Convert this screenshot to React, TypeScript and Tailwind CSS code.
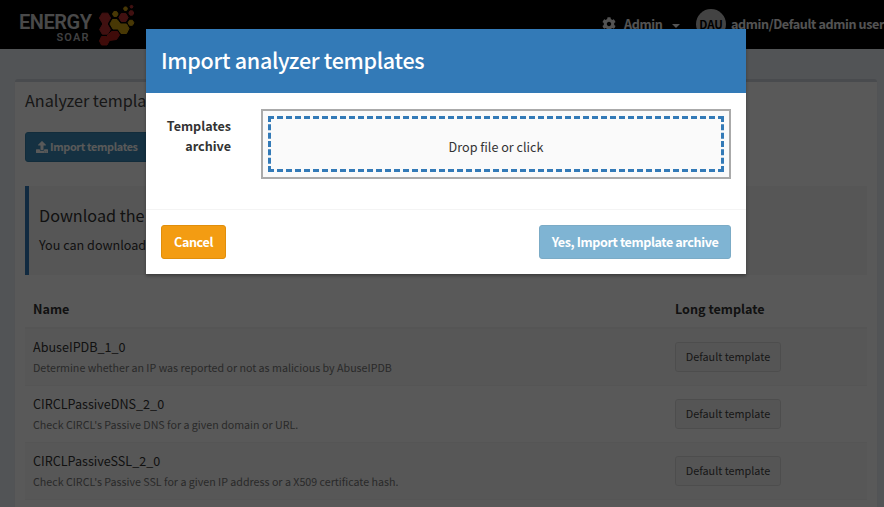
import React from "react";
import { FaCog, FaUpload } from "react-icons/fa";

const rows = [
  { name: "AbuseIPDB_1_0", text: "Determine whether an IP was reported or not as malicious by AbuseIPDB" },
  { name: "CIRCLPassiveDNS_2_0", text: "Check CIRCL's Passive DNS for a given domain or URL." },
  { name: "CIRCLPassiveSSL_2_0", text: "Check CIRCL's Passive SSL for a given IP address or a X509 certificate hash." },
];

function hexagon(cx: number, cy: number, r: number) {
  return [0, 60, 120, 180, 240, 300]
    .map((a) => `${cx + r * Math.cos((a * Math.PI) / 180)},${cy + r * Math.sin((a * Math.PI) / 180)}`)
    .join(" ");
}

function Logo() {
  return (
    <svg className="h-[49px] w-[140px] shrink-0" viewBox="0 0 140 49">
      <text x="19" y="29" textLength="73" lengthAdjust="spacing" fill="#d0d0d2" fontSize="20" fontWeight="600" fontFamily="Roboto, sans-serif">ENERGY</text>
      <text x="56.500" y="41" textLength="32" lengthAdjust="spacing" fill="#b8b8bb" fontSize="11" fontWeight="600" fontFamily="Roboto, sans-serif">SOAR</text>
      <g fill="#b83030" stroke="#b83030" strokeLinejoin="round">
        <polygon points={hexagon(105, 18, 5.6)} />
        <polygon points={hexagon(105, 29.5, 5.4)} />
        <path d="M102.500 21h5v6h-5z" />
        <path fill="#b5221c" stroke="#b5221c" d="M101.500 36.500h5l5-5h6l2 3.500-3 4.500-7 1-2.500 4.500h-5.500l-2-4z" />
        <polygon points={hexagon(123.5, 17.5, 4.6)} />
        <polygon points={hexagon(131.3, 13, 2.5)} />
        <polygon points={hexagon(131.5, 6.7, 1.5)} />
      </g>
      <g fill="#cfa010" stroke="#cfa010" strokeLinejoin="round">
        <polygon points={hexagon(115.3, 14, 2.8)} />
        <polygon points={hexagon(125.5, 8.7, 2)} />
        <polygon points={hexagon(131, 22.8, 2.9)} />
        <path d="M112.500 19.500h4.500l3.500 4.500h6l2.500 4.500-2.500 5h-5.500l-3-4.500h-5l-3-5z" />
      </g>
    </svg>
  );
}

export default function App() {
  return (
    <div className="relative h-[507px] w-[884px] overflow-hidden bg-[#ecf0f5] font-['Noto_Sans_CJK_SC',sans-serif] text-[12.6px] leading-5 text-[#333]">
      <header className="flex h-[49px] items-start bg-black text-white">
        <Logo />
        <div className="ml-[462px] flex h-[47px] shrink-0 items-center text-[12.6px] font-bold tracking-[-0.38px] whitespace-nowrap text-[#eee]">
          <FaCog className="size-3.5" />
          <span className="ml-2 w-10">Admin</span>
          <span className="mt-1 ml-2 border-x-4 border-t-4 border-x-transparent border-t-[#eee]" />
          <span className="ml-4 flex size-[30px] items-center justify-center rounded-full bg-[#bfbfbf] text-[11.4px] tracking-normal text-black">DAU</span>
          <span className="ml-[5px]">admin/Default admin user</span>
        </div>
      </header>

      <main className="mt-[30px] mr-[7px] ml-[15px] h-[440px] rounded-t-[3px] border-t-[3px] border-[#d2d6de] bg-white px-2.5 shadow-[0_1px_1px_rgba(0,0,0,0.1)]">
        <h3 className="h-[50px] pt-2 text-[16.2px] whitespace-nowrap text-[#444]">Analyzer templates</h3>
        <button className="flex h-[30px] w-[125px] items-center rounded-[3px] border border-[#367fa9] bg-[#3c8dbc] pl-2.5 text-[10.8px] font-bold tracking-[-0.33px] whitespace-nowrap text-white">
          <FaUpload className="mr-[2px] size-3" />
          <span className="-mt-0.5">Import templates</span>
        </button>
        <section className="mt-6 h-[89px] border-l-4 border-[#337ab7] bg-[#f7f7f7] px-2.5 pt-[19px]">
          <h4 className="text-[16.2px] whitespace-nowrap">Download the</h4>
          <p className="mt-2.5 whitespace-nowrap">You can download</p>
        </section>
        <div className="mt-4 flex h-[38px] items-center border-b-2 border-[#f4f4f4] pl-2 font-bold">
          <span className="w-[642px]">Name</span>
          <span>Long template</span>
        </div>
        {rows.map((row, i) => (
          <div key={row.name} className={`flex h-[57px] items-center border-b border-[#f4f4f4] pl-2 ${i % 2 === 0 ? "bg-[#f9f9f9]" : "bg-white"}`}>
            <div className="w-[642px] whitespace-nowrap">
              <div className="h-[21px]">{row.name}</div>
              <div className="text-[10.68px] text-[#777]">{row.text}</div>
            </div>
            <button className="h-[30px] w-[106px] rounded-[3px] border border-[#ddd] bg-[#f4f4f4] pb-0.5 text-[10.8px] whitespace-nowrap text-[#444]">Default template</button>
          </div>
        ))}
      </main>

      <div className="absolute inset-0 bg-black/65" />

      <div role="dialog" className="absolute top-[29px] left-[146px] h-[245px] w-[600px] bg-white shadow-[0_2px_3px_rgba(0,0,0,0.3)]">
        <h2 className="flex h-16 items-center bg-[#337ab7] px-[15px] pb-0.5 text-[21.5px] font-medium tracking-[-0.3px] whitespace-nowrap text-white">Import analyzer templates</h2>
        <div className="flex h-[116px] pt-4">
          <label className="w-[85px] pt-[7px] text-right font-bold">Templates archive</label>
          <div className="ml-[30px] h-[70px] w-[470px] border-2 border-[#aaa] bg-[#fafafa] p-[5px]">
            <div className="flex h-full items-center justify-center border-[3px] border-dashed border-[#337ab7] pt-1.5">Drop file or click</div>
          </div>
        </div>
        <footer className="flex h-[65px] justify-between border-t border-[#f4f4f4] p-[15px] font-bold tracking-[-0.4px] whitespace-nowrap text-white">
          <button className="h-[34px] w-[65px] rounded-[3px] border border-[#e08e0b] bg-[#f39c12]">Cancel</button>
          <button className="h-[34px] w-48 rounded-[3px] border border-[#367fa9] bg-[#3c8dbc] opacity-65">Yes, Import template archive</button>
        </footer>
      </div>
    </div>
  );
}
